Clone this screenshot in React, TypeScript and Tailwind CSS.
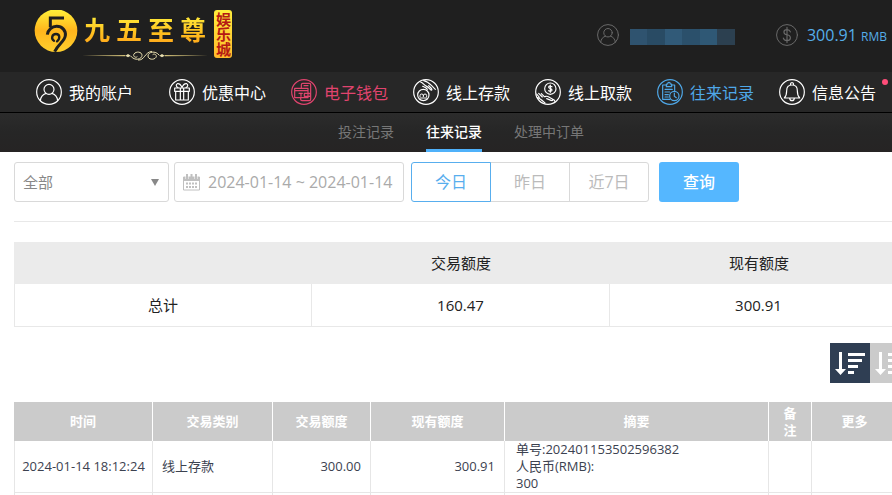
import React, { useState } from "react";
import clsx from "clsx";

type IconProps = { className?: string };

type NavItem = {
  href: string;
  label: string;
  icon: React.ReactNode;
  className: string;
};

function Ring({ children, className = "size-[26px]" }: { children: React.ReactNode; className?: string }) {
  return (
    <svg
      viewBox="0 0 78 78"
      className={clsx("shrink-0", className)}
      fill="none"
      stroke="currentColor"
      strokeWidth={3.5}
      strokeLinecap="round"
      strokeLinejoin="round"
      aria-hidden="true"
    >
      <circle cx="39" cy="39" r="37" />
      {children}
    </svg>
  );
}

function AccountIcon({ className }: IconProps) {
  return (
    <Ring className={className}>
      <circle cx="39" cy="31" r="15" />
      <path d="M13 65c1-12 8-19 17-22M65 65c-1-12-8-19-17-22" />
    </Ring>
  );
}

function GiftIcon() {
  return (
    <Ring>
      <path d="M17 27h44v10H17zM20 37v26h38V37M34 27v36M44 27v36" />
      <path d="M39 26c-3-8-8-13-14-12-5 2-4 10 2 12M39 26c3-8 8-13 14-12 5 2 4 10-2 12" />
    </Ring>
  );
}

function WalletIcon() {
  return (
    <Ring>
      <path d="M31 27V17q0-4 4-4h20q4 0 4 4v44q0 4-4 4H33q-4 0-4-4v-4M39 20h12" />
      <path d="M11 28h40v28H11zM11 35h40M40 43h18v9H40zM24 43h10M30 43v9" />
    </Ring>
  );
}

function DepositIcon() {
  return (
    <Ring>
      <circle cx="31" cy="48" r="17" />
      <path d="M21 53v-3q0-5 5-5t5 5v3M31 50q0-5 5-5t5 5v3M21 57h20" strokeWidth={3} />
      <path d="M23 9c8 3 10 10 18 13 5 2 9 8 13 11 4 1 3-3 0-6l-7-7M32 5c10 2 18 9 24 15l11 11M29 22c5 3 10 3 14 9" />
    </Ring>
  );
}

function WithdrawIcon() {
  return (
    <Ring>
      <circle cx="46" cy="29" r="17" />
      <path d="M51 23q-10-4-10 2c0 5 10 3 10 8 0 5-7 4-10 2M46 18v22" />
      <path d="M5 45l8 10M11 43l11 11M19 44l9 9M7 56c8 2 14 8 23 16M28 53c5 0 7-3 12 0l12 7c4 3 0 6-4 4l-13-5M52 60c4 1 7 4 8 8" />
    </Ring>
  );
}

function RecordIcon() {
  return (
    <Ring>
      <path d="M29 18H17v43h22M43 18h10v17M28 15h4q0-5 4-5t4 5h4v8H28z" />
      <path d="M24 31h22M24 39h14M24 47h10M24 54h10" />
      <circle cx="52" cy="51" r="14" />
      <path d="M52 42v10l6 4" />
    </Ring>
  );
}

function BellIcon() {
  return (
    <Ring>
      <path d="M16 57c6-6 7-12 7-22 0-10 6-17 16-17s16 7 16 17c0 10 1 16 7 22zM34 17q0-6 5-6t5 6M32 58q1 7 7 7t7-7" />
    </Ring>
  );
}

function DollarIcon({ className }: IconProps) {
  return (
    <Ring className={className}>
      <path d="M51 28c-2-6-7-8-12-8-14 0-15 16 0 18 17 3 15 21 0 21-6 0-11-2-13-9M39 12v54" strokeWidth={4} />
    </Ring>
  );
}

function CalendarIcon() {
  return (
    <svg viewBox="0 0 17 18" className="h-[18px] w-[17px] shrink-0 text-[#c0c0c0]" aria-hidden="true">
      <path d="M.5 4h16v13H.5z" fill="none" stroke="currentColor" />
      <path
        d="M0 4h17v4H0zM3 1h2v4H3zM7.500 1h2v4h-2zM12 1h2v4h-2zM3 9.500h2v2H3zM6 9.500h2v2H6zM9 9.500h2v2H9zM12 9.500h2v2h-2zM3 13h2v2H3zM6 13h2v2H6zM9 13h2v2H9zM12 13h2v2h-2z"
        fill="currentColor"
      />
      <path d="M2.500 3v3M5.500 3v3M11.500 3v3M14.500 3v3" stroke="white" strokeWidth=".5" />
    </svg>
  );
}

function SortIcon() {
  return (
    <svg viewBox="0 0 40 40" className="size-10" fill="white" aria-hidden="true">
      <path d="M9 9h3v17h4l-5.500 6L5 26h4zM18 10h17v3H18zM18 16h14v3H18zM18 22h10v3H18zM18 28h6v3h-6z" />
    </svg>
  );
}

const NAV: NavItem[] = [
  { href: "#account", label: "我的账户", icon: <AccountIcon />, className: "mr-[11px] text-white" },
  { href: "#promo", label: "优惠中心", icon: <GiftIcon />, className: "text-white" },
  { href: "#wallet", label: "电子钱包", icon: <WalletIcon />, className: "text-[#e0446e]" },
  { href: "#deposit", label: "线上存款", icon: <DepositIcon />, className: "text-white" },
  { href: "#withdraw", label: "线上取款", icon: <WithdrawIcon />, className: "text-white" },
  { href: "#history", label: "往来记录", icon: <RecordIcon />, className: "text-[#4fa8e8]" },
  { href: "#notice", label: "信息公告", icon: <BellIcon />, className: "text-white" },
];

const TABS = ["投注记录", "往来记录", "处理中订单"];
const RANGES = ["今日", "昨日", "近7日"];

const MASK = ["bg-[#2f536f]", "bg-[#294b64]", "bg-[#315a78]", "bg-[#2b506b]", "bg-[#2f5875]", "bg-[#2c4050]"];

function Logo() {
  return (
    <a href="#home" className="flex items-start gap-1 pt-[10px]" aria-label="九五至尊娱乐城">
      <svg viewBox="0 0 132 132" className="size-11 shrink-0" aria-hidden="true">
        <defs>
          <linearGradient id="coin" x1="0" y1="0" x2="0" y2="1">
            <stop offset="0" stopColor="#fff23a" />
            <stop offset=".5" stopColor="#ffb51c" />
            <stop offset="1" stopColor="#ffcf2e" />
          </linearGradient>
        </defs>
        <circle cx="66" cy="62" r="64" fill="url(#coin)" />
        <path d="M90 24H49v28" fill="none" stroke="#1f1f1f" strokeWidth="9" />
        <path d="M40 74c2-15 14-25 28-25 17 0 28 13 26 28-2 17-20 24-32 48" fill="none" stroke="#1f1f1f" strokeWidth="9" />
        <path d="M60 92c-9-5-7-20 6-20 12 0 13 14 3 22" fill="none" stroke="#1f1f1f" strokeWidth="7" strokeLinecap="round" />
      </svg>
      <div className="flex flex-col items-center pt-1">
        <div className="flex gap-1.5 bg-gradient-to-b from-[#fff03c] via-[#ffc21f] to-[#ff9a1a] bg-clip-text font-['Liberation_Serif','Noto_Sans_CJK_SC',serif] text-[26px] leading-9 font-bold text-transparent">
          <span>九</span>
          <span>五</span>
          <span>至</span>
          <span>尊</span>
        </div>
        <svg viewBox="0 0 378 36" className="h-3 w-[126px]" fill="none" stroke="#e9dfaf" aria-hidden="true">
          <path d="M0 17l130-2v4zM378 17l-130-2v4z" fill="#cfbd77" stroke="none" />
          <path d="M130 17l8-5 8 5-8 5zM248 17l-8-5-8 5 8 5z" fill="#e9dfaf" stroke="none" />
          <path d="M166 20c-6 5-14-2-10-8 6-9 24-7 24 4 0 12-22 18-34 2M212 14c6-5 14 2 10 8-6 9-24 7-24-4 0-12 22-18 34-2M168 30c20 2 20-24 42-26" strokeWidth="3" />
        </svg>
      </div>
      <span className="ml-0.5 h-12 w-[18px] rounded-[3px] bg-gradient-to-b from-[#ffee3d] to-[#ffb92c] text-center text-[15px] leading-[18px] font-bold whitespace-nowrap text-[#b51a14] [writing-mode:vertical-rl]">
        娱乐城
      </span>
    </a>
  );
}

function TopBar() {
  return (
    <div className="flex h-[72px] items-start bg-[#1f1f1f] pl-[34px]">
      <Logo />
      <div className="ml-auto flex h-[70px] items-center pr-[35px]">
        <AccountIcon className="size-[22px] text-[#6a6a6a]" />
        <div className="mt-1 ml-[11px] flex h-4 w-[105px]">
          {MASK.map((color, i) => (
            <span key={i} className={clsx("flex-1", color)} />
          ))}
        </div>
        <DollarIcon className="ml-[41px] size-[22px] text-[#6a6a6a]" />
        <span className="ml-[9px] text-[16px] text-[#55aeea]">
          300.91 <span className="text-[12px]">RMB</span>
        </span>
      </div>
    </div>
  );
}

function MainNav() {
  return (
    <nav className="flex h-10 items-center gap-[25px] bg-[#272727] pl-9">
      {NAV.map((item) => (
        <a key={item.href} href={item.href} className={clsx("relative flex items-center gap-[7px] text-[16px] whitespace-nowrap", item.className)}>
          {item.icon}
          <span className="pt-0.5">{item.label}</span>
          {item.href === "#notice" && <span className="absolute top-0 -right-3 size-1.5 rounded-full bg-[#ff4d79]" />}
        </a>
      ))}
    </nav>
  );
}

function SubNav() {
  const [active, setActive] = useState("往来记录");

  return (
    <div className="flex h-10 justify-center gap-8 border-t border-black bg-gradient-to-b from-[#2c2c2c] via-[#262626] to-[#262424]">
      {TABS.map((tab) => (
        <button
          key={tab}
          type="button"
          onClick={() => setActive(tab)}
          className={clsx("border-b-3 text-[14px]", tab === active ? "border-[#4fb1fa] font-medium text-white" : "border-transparent text-[#777]")}
        >
          {tab}
        </button>
      ))}
    </div>
  );
}

function Filters() {
  const [range, setRange] = useState("今日");

  return (
    <form className="flex h-[70px] items-start border-b border-[#e8e8e8] pt-[10px]" onSubmit={(e) => e.preventDefault()}>
      <div className="relative w-[155px]">
        <select aria-label="类别" className="h-10 w-full appearance-none rounded-[3px] border border-[#d9d9d9] bg-white px-2 text-[15px] text-[#888]">
          <option>全部</option>
        </select>
        <svg viewBox="0 0 8 7" className="pointer-events-none absolute top-[17px] right-2.5 h-[7px] w-2" fill="#888" aria-hidden="true">
          <path d="M0 0h8L4 7z" />
        </svg>
      </div>
      <label className="ml-[5px] flex h-10 w-[230px] items-center rounded-[3px] border border-[#d9d9d9] pl-2">
        <CalendarIcon />
        <input aria-label="日期" defaultValue="2024-01-14 ~ 2024-01-14" className="ml-2 w-full min-w-0 text-[16px] text-[#aaa] outline-none" />
      </label>
      <div className="ml-[7px] flex">
        {RANGES.map((item, i) => (
          <button
            key={item}
            type="button"
            onClick={() => setRange(item)}
            className={clsx(
              "h-10 w-20 border text-[16px]",
              i === 0 && "rounded-l-[3px]",
              i > 0 && "-ml-px",
              i === RANGES.length - 1 && "rounded-r-[3px]",
              range === item ? "z-10 border-[#58aeee] text-[#58aeee]" : "border-[#d9d9d9] text-[#bbb]"
            )}
          >
            {item}
          </button>
        ))}
      </div>
      <button type="submit" className="ml-[10px] h-10 w-20 rounded-[3px] bg-[#55b7ff] text-[16px] font-medium text-white">
        查询
      </button>
    </form>
  );
}

function Summary() {
  return (
    <table className="mt-5 w-full table-fixed border-separate border-spacing-0 text-center text-[15px] text-[#222]">
      <thead>
        <tr className="h-[42px] bg-[#ebebeb]">
          <td />
          <th className="font-normal">交易额度</th>
          <th className="font-normal">现有额度</th>
        </tr>
      </thead>
      <tbody>
        <tr className="h-[43px]">
          <th className="border-x border-b border-[#e8e8e8] font-normal">总计</th>
          <td className="border-r border-b border-[#e8e8e8]">160.47</td>
          <td className="border-r border-b border-[#e8e8e8]">300.91</td>
        </tr>
      </tbody>
    </table>
  );
}

const COLUMNS = [
  { label: "时间", width: "w-[139px]" },
  { label: "交易类别", width: "w-[120px]" },
  { label: "交易额度", width: "w-[98px]" },
  { label: "现有额度", width: "w-[134px]" },
  { label: "摘要", width: "" },
  { label: "备注", width: "w-[43px]" },
  { label: "更多", width: "w-24" },
];

function Records() {
  return (
    <table className="mt-[19px] w-full table-fixed border-separate border-spacing-0 text-[13px] leading-[17px] text-[#3c4250]">
      <thead>
        <tr className="h-[39px] bg-[#cbcbcb] text-white">
          {COLUMNS.map((col) => (
            <th key={col.label} className={clsx("border-r border-white px-[14px] py-0 font-bold last:pr-6", col.width)}>
              {col.label}
            </th>
          ))}
        </tr>
      </thead>
      <tbody>
        <tr className="h-[52px]">
          <td className="border-x border-b border-[#e6e6e6] py-0 text-center whitespace-nowrap">2024-01-14 18:12:24</td>
          <td className="border-r border-b border-[#e6e6e6] px-[9px] py-0">线上存款</td>
          <td className="border-r border-b border-[#e6e6e6] px-[9px] py-0 text-right">300.00</td>
          <td className="border-r border-b border-[#e6e6e6] px-[9px] py-0 text-right">300.91</td>
          <td className="border-r border-b border-[#e6e6e6] px-[11px] py-0">
            单号:202401153502596382
            <br />
            人民币(RMB):
            <br />
            300
          </td>
          <td className="border-r border-b border-[#e6e6e6]" />
          <td className="border-r border-b border-[#e6e6e6]" />
        </tr>
        <tr className="h-[52px]">
          {COLUMNS.map((col) => (
            <td key={col.label} className="border-r border-b border-[#e6e6e6] first:border-l" />
          ))}
        </tr>
      </tbody>
    </table>
  );
}

export default function App() {
  return (
    <div className="h-screen overflow-hidden bg-white font-['Open_Sans','Noto_Sans_CJK_SC',sans-serif]">
      <div className="-mr-[30px]">
        <header>
          <TopBar />
          <MainNav />
          <SubNav />
        </header>
        <main className="px-[14px]">
          <Filters />
          <Summary />
          <div className="-mr-0.5 mt-4 flex justify-end">
            <button type="button" aria-label="降序" className="size-10 bg-[#2f3e53]">
              <SortIcon />
            </button>
            <button type="button" aria-label="升序" className="size-10 bg-[#cbcbcb]">
              <SortIcon />
            </button>
          </div>
          <Records />
        </main>
      </div>
    </div>
  );
}
